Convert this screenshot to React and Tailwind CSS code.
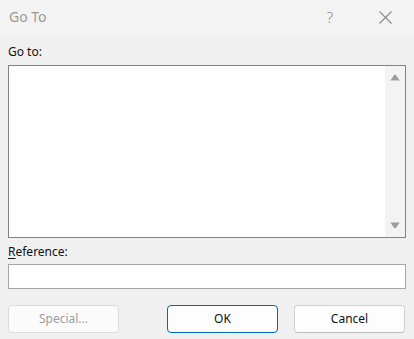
import React from 'react';

const font = { fontFamily: '"Noto Sans", "Open Sans", sans-serif' };

const Arrow = ({ down }) => (
  <svg width="10" height="7" viewBox="0 0 10 7" className={down ? 'rotate-180' : ''}>
    <path d="M0.3 6.5 L4.2 0.9 Q5 0 5.8 0.9 L9.7 6.5 Z" fill="#9c9c9c" />
  </svg>
);

const Button = ({ children, primary, disabled }) => (
  <button
    className={`h-[28px] w-[111px] rounded-[4px] border text-[12px] leading-4 ${
      primary
        ? 'border-[#0067c0] bg-[#fdfdfd] text-[#111111]'
        : disabled
        ? 'border-[#dcdcdc] bg-[#fbfbfb] text-[#9d9d9d]'
        : 'border-[#d0d0d0] border-b-[#bcbcbc] bg-[#fdfdfd] text-[#111111]'
    }`}
  >
    {children}
  </button>
);

export default function App() {
  return (
    <div className="w-[414px] h-[339px] bg-[#f0f0f0] overflow-hidden" style={font}>
      {/* Title bar */}
      <div className="h-[35px] bg-[#f3f3f3] flex items-center pb-[2px]">
        <span className="pl-[9px] text-[14px] leading-5 text-[#9a9a9a]">Go To</span>
        <span className="ml-auto mr-[46px] text-[15px] leading-5 font-light text-[#8a8a8a]">?</span>
        <svg width="13" height="13" viewBox="0 0 13 13" className="mr-[22px] mt-[2px]">
          <path d="M0.5 0.5 L12.5 12.5 M12.5 0.5 L0.5 12.5" stroke="#8a8a8a" strokeWidth="1.1" />
        </svg>
      </div>

      <div className="px-2 text-[#111111]">
        <div className="mt-[9px] text-[12px] leading-4">Go to:</div>

        <div className="mt-[5px] h-[173px] border border-[#828282] bg-white flex justify-end">
          <div className="w-[20px] bg-[#f3f3f3] flex flex-col items-center justify-between pt-[8px] pb-[8px]">
            <Arrow />
            <Arrow down />
          </div>
        </div>

        <div className="mt-[6px] text-[12px] leading-4">
          <span className="underline underline-offset-2">R</span>eference:
        </div>

        <div className="mt-[4px] h-[25px] border border-[#a6a6a6] bg-white" />

        <div className="mt-[16px] flex items-center">
          <Button disabled>Special...</Button>
          <div className="ml-auto mr-[1px] flex gap-4">
            <Button primary>OK</Button>
            <Button>Cancel</Button>
          </div>
        </div>
      </div>
    </div>
  );
}
